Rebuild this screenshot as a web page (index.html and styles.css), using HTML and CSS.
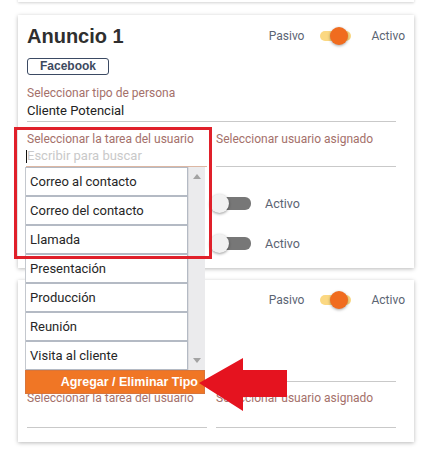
FILE: index.html
```html
<!DOCTYPE html>
<html lang="es">
<head>
<meta charset="utf-8">
<title>Anuncios</title>
<link rel="stylesheet" href="styles.css">
</head>
<body>
<div class="page">
  <div class="prev-card"></div>

  <section class="card card1">
    <div class="head">
      <h2 class="title">Anuncio 1</h2>
      <div class="status">
        <span class="st-text">Pasivo</span>
        <span class="switch on"><span class="knob"></span></span>
        <span class="st-text">Activo</span>
      </div>
    </div>
    <span class="badge">Facebook</span>
    <div class="field">
      <div class="label">Seleccionar tipo de persona</div>
      <div class="value">Cliente Potencial</div>
    </div>
    <div class="cols">
      <div class="field">
        <div class="label">Seleccionar la tarea del usuario</div>
        <div class="value search"><span class="caret"></span><span class="placeholder">Escribir para buscar</span></div>
      </div>
      <div class="field">
        <div class="label">Seleccionar usuario asignado</div>
        <div class="value"></div>
      </div>
    </div>
    <div class="toggle-row">
      <span class="switch off"><span class="knob"></span></span>
      <span class="st-text">Activo</span>
    </div>
    <div class="toggle-row">
      <span class="switch off"><span class="knob"></span></span>
      <span class="st-text">Activo</span>
    </div>
  </section>

  <section class="card card2">
    <div class="head">
      <div class="title-space"></div>
      <div class="status">
        <span class="st-text">Pasivo</span>
        <span class="switch on"><span class="knob"></span></span>
        <span class="st-text">Activo</span>
      </div>
    </div>
    <div class="hidden-block"></div>
    <div class="cols">
      <div class="field">
        <div class="line-top"></div>
        <div class="label">Seleccionar la tarea del usuario</div>
        <div class="value"></div>
      </div>
      <div class="field">
        <div class="line-top"></div>
        <div class="label">Seleccionar usuario asignado</div>
        <div class="value"></div>
      </div>
    </div>
  </section>

  <div class="dropdown">
    <div class="list">
      <ul class="items">
        <li>Correo al contacto</li>
        <li>Correo del contacto</li>
        <li>Llamada</li>
        <li>Presentación</li>
        <li>Producción</li>
        <li>Reunión</li>
        <li>Visita al cliente</li>
      </ul>
      <div class="scrollbar">
        <span class="arr up"></span>
        <span class="arr down"></span>
      </div>
    </div>
    <div class="add-btn">Agregar / Eliminar Tipo</div>
  </div>

  <div class="highlight"></div>

  <svg class="arrow" width="90" height="56" viewBox="0 0 90 56">
    <polygon points="0,25 44,0 44,12 88,12 88,39 44,39 44,53" fill="#e5131f"/>
  </svg>
</div>
</body>
</html>
```

FILE: styles.css
```css
* { box-sizing: border-box; }
html, body { margin: 0; padding: 0; background: #fff; }
body { font-family: Roboto, "Noto Sans", Arial, sans-serif; color: #333; }

.page { position: relative; width: 426px; height: 450px; overflow: hidden; }

.prev-card {
  margin: -4px 12px 0 18px;
  height: 6px;
  background: #fff;
  box-shadow: 0 1px 3px rgba(0,0,0,0.18);
}

.card {
  margin-left: 18px;
  width: 396px;
  background: #fff;
  box-shadow: 0 1px 4px rgba(0,0,0,0.28);
  padding: 9px 9px 15px 9px;
  display: flex;
  flex-direction: column;
  align-items: flex-start;
}
.card1 { margin-top: 13px; }
.card2 { margin-top: 12px; padding: 8px 9px 14px 9px; }

.head {
  width: 100%;
  height: 24px;
  display: flex;
  align-items: center;
  justify-content: space-between;
}
.title {
  margin: 0;
  font-size: 20px;
  line-height: 24px;
  font-weight: 700;
  color: #2f2f2f;
  font-family: "Liberation Sans", Arial, sans-serif;
}
.title-space { width: 96px; height: 24px; }
.status { display: flex; align-items: center; }
.st-text { font-size: 12px; color: #5b6473; }

.switch { position: relative; display: inline-block; border-radius: 6px; }
.switch.on {
  width: 31px; height: 10px; background: #fbd882;
  margin: 0 20px 0 16px;
}
.switch.on .knob {
  position: absolute; left: 10px; top: -4px;
  width: 18px; height: 18px; border-radius: 50%;
  background: #f06c1f;
  box-shadow: 0 1px 3px rgba(0,0,0,0.35);
}
.switch.off {
  width: 37px; height: 13px; background: #777;
  margin: 0 14px 0 0;
}
.switch.off .knob {
  position: absolute; left: -4px; top: -3px;
  width: 19px; height: 19px; border-radius: 50%;
  background: #f1f1f1;
  box-shadow: 0 1px 3px rgba(0,0,0,0.4);
}
.toggle-row .st-text { font-size: 12.5px; }

.badge {
  margin-top: 10px;
  height: 17px;
  padding: 0 12px;
  border: 1px solid #3b4a63;
  border-radius: 3px;
  font-size: 12px;
  line-height: 15px;
  font-weight: 700;
  color: #3d4a60;
  font-family: "Liberation Sans", Arial, sans-serif;
}

.field { width: 100%; }
.card > .field { margin-top: 11px; width: 369px; }
.label { font-size: 12px; line-height: 14px; color: #a4706a; white-space: nowrap; }
.value {
  margin-top: 3px;
  height: 19px;
  font-size: 13px;
  line-height: 16px;
  color: #222;
  border-bottom: 1px solid #c9c9c9;
  padding-bottom: 2px;
  white-space: nowrap;
}

.cols {
  margin-top: 10px;
  width: 369px;
  display: grid;
  grid-template-columns: 180px 180px;
  column-gap: 9px;
}
.cols .value { margin-top: 2px; }
.value.search { display: flex; align-items: center; border-bottom-color: #dcb7a3; margin-left: -1px; }
.caret { width: 1px; height: 13px; background: #111; }
.placeholder { color: #c9c9c9; }

.toggle-row {
  margin-top: 26px;
  margin-left: 187px;
  height: 20px;
  display: flex;
  align-items: center;
}
.toggle-row + .toggle-row { margin-top: 20px; }

/* card 2: the part covered by the dropdown */
.hidden-block { height: 69px; }
.card2 .cols { margin-top: 0; }
.line-top { height: 1px; background: #c9c9c9; margin-bottom: 9px; }
.card2 .cols .value { margin-top: 4px; }

/* dropdown overlay */
.dropdown {
  position: absolute;
  left: 25px;
  top: 167px;
  width: 180px;
  background: #fff;
}
.list { display: flex; background: #fff; border-left: 1px solid #c4c8ce; }
.items { list-style: none; margin: 0; padding: 0; width: 162px; }
.items li {
  height: 29px;
  border: 1px solid #b4bac4;
  border-left: 0;
  padding-left: 4px;
  font-size: 13px;
  line-height: 27px;
  color: #262626;
  background: #fff;
}
.scrollbar {
  position: relative;
  width: 17px;
  background: #ebebed;
  border-left: 1px solid #dcdcdf;
}
.arr { position: absolute; left: 4px; width: 0; height: 0; border-left: 4px solid transparent; border-right: 4px solid transparent; }
.arr.up { top: 7px; border-bottom: 5px solid #a3a3a3; }
.arr.down { bottom: 7px; border-top: 5px solid #a3a3a3; }

.add-btn {
  height: 24px;
  background: #f07625;
  border: 1px solid #d8753a;
  color: #fff;
  font-size: 12.5px;
  font-weight: 700;
  line-height: 22px;
  text-align: right;
  padding-right: 6px;
  font-family: "Liberation Sans", Arial, sans-serif;
}

.highlight {
  position: absolute;
  left: 14px;
  top: 127px;
  width: 198px;
  height: 132px;
  border: 3px solid #e0202a;
}

.arrow { position: absolute; left: 199px; top: 358px; }
```
